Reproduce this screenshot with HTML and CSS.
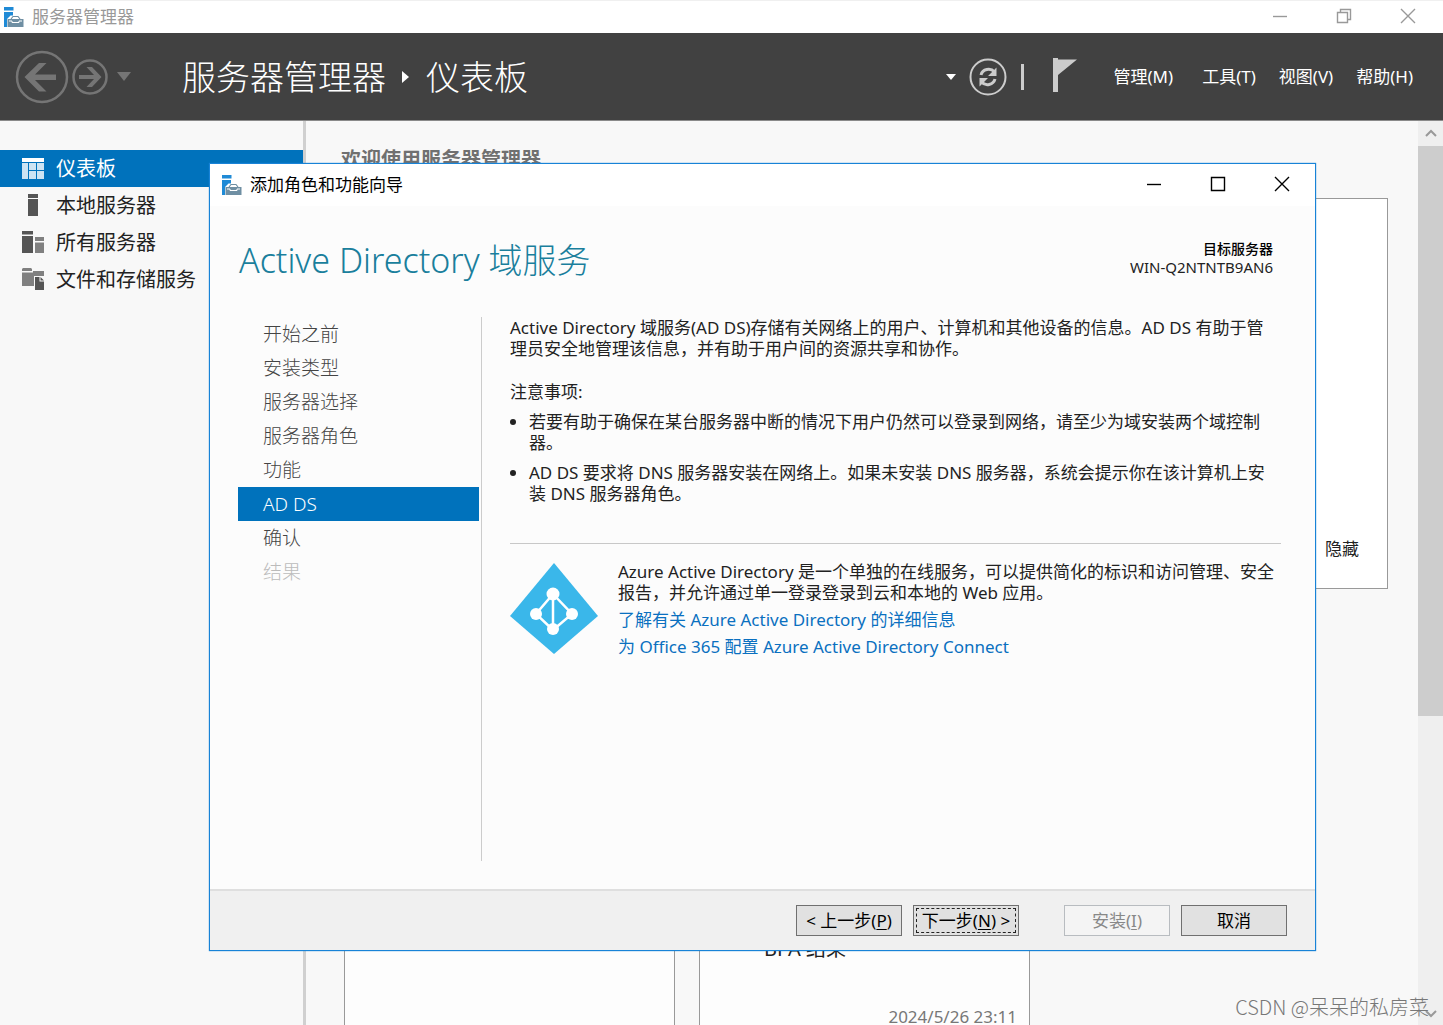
FILE: index.html
```html
<!DOCTYPE html>
<html lang="zh-CN">
<head>
<meta charset="utf-8">
<title>服务器管理器</title>
<link rel="stylesheet" href="styles.css">
</head>
<body>
<svg width="0" height="0" class="defs" aria-hidden="true">
  <symbol id="app-icon" viewBox="0 0 20 20">
    <path fill="#1f8ad6" d="M0 0h9.500v3.500H0zM0 5h9v3.500H6.500L3 12v8H0z"/>
    <path fill="#6f8fa3" d="M3.500 12h16v8h-16z"/>
    <path fill="none" stroke="#6f8fa3" stroke-width="1.200" d="M7 12l2-2.500h5l2 2.500"/>
    <path fill="none" stroke="#fff" stroke-width="1" d="M5 14h3v1.500h7V14h3"/>
  </symbol>
</svg>
<div class="app">
  <header class="titlebar">
    <svg class="app-icon"><use href="#app-icon"/></svg>
    <span class="titlebar-text">服务器管理器</span>
    <div class="window-controls">
      <button type="button" aria-label="最小化"><svg width="16" height="16"><path d="M1 8.500h14"/></svg></button>
      <button type="button" aria-label="还原"><svg width="16" height="16"><path d="M1.500 4.500h10v10h-10zM4.500 4.500v-3h10v10h-3"/></svg></button>
      <button type="button" aria-label="关闭"><svg width="16" height="16"><path d="M1 1l14 14M15 1L1 15"/></svg></button>
    </div>
  </header>

  <nav class="banner">
    <button type="button" class="nav-back" aria-label="后退"><svg width="54" height="54" viewBox="0 0 54 54"><circle cx="27" cy="27" r="25" fill="none" stroke="#757575" stroke-width="2.500"/><path fill="#757575" d="M9.500 27L24 13h7.500L20 24.500h21v5.500H20l11.500 11.500H24z"/></svg></button>
    <button type="button" class="nav-forward" aria-label="前进"><svg width="36" height="38" viewBox="0 0 36 38"><circle cx="18" cy="19" r="16.500" fill="none" stroke="#757575" stroke-width="2.500"/><path fill="#757575" d="M29.500 19L20 29h-5.500l7.500-8H7v-4h15l-7.500-8H20z"/></svg></button>
    <button type="button" class="nav-history" aria-label="历史记录"><svg width="14" height="9"><path fill="#757575" d="M0 0h14L7 9z"/></svg></button>
    <div class="breadcrumb">
      <span>服务器管理器</span>
      <svg width="8" height="12"><path fill="#fff" d="M0 0l7 6-7 6z"/></svg>
      <span>仪表板</span>
    </div>
    <div class="tools">
      <button type="button" aria-label="更多"><svg width="10" height="6"><path fill="#fff" d="M0 0h10L5 6z"/></svg></button>
      <button type="button" class="refresh" aria-label="刷新"><svg width="38" height="38" viewBox="0 0 38 38"><circle cx="19" cy="19" r="17.500" fill="none" stroke="#ccc" stroke-width="2"/><g fill="none" stroke="#ccc" stroke-width="3"><path d="M12 17c1.500-6 9.500-7.500 13.500-3"/><path d="M26 21c-1.500 6-9.500 7.500-13.500 3"/></g><path fill="#ccc" d="M27.500 9.500v8.500H19zM10.500 28.500V20H19z"/></svg></button>
      <span class="separator"></span>
      <button type="button" class="flag" aria-label="通知"><svg width="24" height="34"><path fill="#ccc" d="M0 0h5v34H0zM5 1.500h19L5 17z"/></svg></button>
      <button type="button" class="menu menu-first">管理(M)</button>
      <button type="button" class="menu">工具(T)</button>
      <button type="button" class="menu">视图(V)</button>
      <button type="button" class="menu">帮助(H)</button>
    </div>
  </nav>

  <div class="workspace">
    <aside class="sidebar">
      <a href="#" class="side-item current"><svg width="24" height="24"><path fill="#fff" d="M1 1h22v4H1z"/><path fill="#cde4f3" d="M1 6h6v16H1zM8 6h7v7H8zM16 6h7v7h-7zM8 14h7v8H8zM16 14h7v8h-7z"/></svg>仪表板</a>
      <a href="#" class="side-item"><svg width="24" height="24"><path fill="#555" d="M7 0h10v4H7zM7 5h10v17H7z"/></svg>本地服务器</a>
      <a href="#" class="side-item"><svg width="24" height="24"><path fill="#555" d="M1 0h11v3.500H1zM1 5h11v17H1z"/><path fill="#808080" d="M14 6h9v4h-9zM14 11.500h9V22h-9z"/></svg>所有服务器</a>
      <a href="#" class="side-item"><svg width="24" height="24"><path fill="#808080" d="M2 0h8l1 1v2H1V1zM1 4.500h11V3h11v5h-10v10H1z"/><path fill="#555" d="M14 9h4.500v4.500H23V22h-9zM19.500 9L23 12.500h-3.500z"/></svg>文件和存储服务</a>
    </aside>
    <main class="dashboard">
      <h1>欢迎使用服务器管理器</h1>
      <section class="welcome"><button type="button" class="hide-button">隐藏</button></section>
      <section class="tiles">
        <article class="tile"></article>
        <article class="tile"><p class="tile-row">BPA 结果</p><time>2024/5/26 23:11</time></article>
      </section>
    </main>
    <div class="scrollbar" aria-hidden="true">
      <svg width="14" height="24"><path d="M2 15l5-5 5 5"/></svg>
      <div class="thumb"></div>
      <svg width="14" height="24" class="scroll-down"><path d="M2 10l5 5 5-5"/></svg>
    </div>
  </div>
</div>

<div class="wizard" role="dialog" aria-labelledby="wizard-title">
  <header class="wizard-titlebar">
    <svg class="app-icon"><use href="#app-icon"/></svg>
    <span id="wizard-title">添加角色和功能向导</span>
    <div class="window-controls">
      <button type="button" aria-label="最小化"><svg width="16" height="16"><path d="M1 8.500h14"/></svg></button>
      <button type="button" aria-label="最大化"><svg width="16" height="16"><path d="M1.500 1.500h13v13h-13z"/></svg></button>
      <button type="button" aria-label="关闭"><svg width="16" height="16"><path d="M1 1l14 14M15 1L1 15"/></svg></button>
    </div>
  </header>
  <div class="wizard-head">
    <h2>Active Directory 域服务</h2>
    <p class="target"><strong>目标服务器</strong><span>WIN-Q2NTNTB9AN6</span></p>
  </div>
  <div class="wizard-body">
    <ol class="steps">
      <li>开始之前</li>
      <li>安装类型</li>
      <li>服务器选择</li>
      <li>服务器角色</li>
      <li>功能</li>
      <li class="active">AD DS</li>
      <li>确认</li>
      <li class="disabled">结果</li>
    </ol>
    <div class="content">
      <p>Active Directory 域服务(AD DS)存储有关网络上的用户、计算机和其他设备的信息。AD DS 有助于管<br>理员安全地管理该信息，并有助于用户间的资源共享和协作。</p>
      <p class="notes-label">注意事项:</p>
      <ul class="notes">
        <li>若要有助于确保在某台服务器中断的情况下用户仍然可以登录到网络，请至少为域安装两个域控制<br>器。</li>
        <li>AD DS 要求将 DNS 服务器安装在网络上。如果未安装 DNS 服务器，系统会提示你在该计算机上安<br>装 DNS 服务器角色。</li>
      </ul>
      <div class="azure">
        <svg width="88" height="91" viewBox="0 0 88 91"><path fill="#3ab7ea" d="M44 0l44 53-44 38L0 53z"/><g stroke="#fff" stroke-width="2.500" fill="none"><path d="M43 31v36M43 31L26 51l17 16 19-16z"/></g><g fill="#fff"><circle cx="43" cy="31" r="6.500"/><circle cx="26" cy="51" r="6"/><circle cx="62" cy="51" r="6"/><circle cx="43" cy="66" r="6"/></g></svg>
        <div class="azure-text">
          <p>Azure Active Directory 是一个单独的在线服务，可以提供简化的标识和访问管理、安全<br>报告，并允许通过单一登录登录到云和本地的 Web 应用。</p>
          <a href="#">了解有关 Azure Active Directory 的详细信息</a>
          <a href="#">为 Office 365 配置 Azure Active Directory Connect</a>
        </div>
      </div>
    </div>
  </div>
  <footer class="wizard-footer">
    <button type="button">&lt; 上一步(<u>P</u>)</button>
    <button type="button" class="default">下一步(<u>N</u>) &gt;</button>
    <button type="button" class="install" disabled>安装(<u>I</u>)</button>
    <button type="button">取消</button>
  </footer>
</div>
<div class="watermark">CSDN @呆呆的私房菜</div>
</body>
</html>
```

FILE: styles.css
```css
* { box-sizing: border-box; }

body {
  margin: 0;
  height: 100vh;
  overflow: hidden;
  position: relative;
  font: 17px/22px "Noto Sans", "Noto Sans CJK SC", sans-serif;
  color: #222;
  background: #f8f8f8;
}

h1, h2, p, ul, ol { margin: 0; padding: 0; }
svg { display: block; flex: none; }
a { text-decoration: none; }

button {
  font: inherit;
  color: inherit;
  background: none;
  border: 0;
  padding: 0;
  white-space: nowrap;
}

.defs { position: absolute; }
.app { height: 100%; display: flex; flex-direction: column; }
.app-icon { width: 20px; height: 20px; }

/* Main window title bar */
.titlebar {
  height: 33px;
  flex: none;
  display: flex;
  align-items: center;
  gap: 8px;
  padding: 0 27px 0 4px;
  background: #fff;
  border-top: 1px solid #f0f0f0;
  color: #999;
}

.window-controls { margin-left: auto; padding-bottom: 3px; display: flex; gap: 48px; }
.window-controls path { fill: none; stroke: currentColor; stroke-width: 1.4; }

/* Dark navigation banner */
.banner {
  height: 88px;
  flex: none;
  display: flex;
  align-items: center;
  padding: 0 30px 0 15px;
  background: #414141;
  border-bottom: 1px solid #8a8a8a;
  color: #fff;
}

.nav-forward { margin-left: 3px; }
.nav-history { margin-left: 9px; }

.breadcrumb {
  display: flex;
  align-items: center;
  gap: 16px;
  margin-left: 51px;
  font-size: 34px;
  line-height: 44px;
  font-weight: 300;
}

.tools { margin-left: auto; display: flex; align-items: center; }
.refresh { margin-left: 13px; }
.separator { width: 3px; height: 26px; margin-left: 14px; background: #ccc; }
.flag { margin-left: 29px; align-self: flex-start; }
.menu { margin-left: 23px; }
.menu-first { margin-left: 37px; }
.menu-first + .menu { margin-left: 29px; }

/* Workspace */
.workspace { flex: 1; min-height: 0; display: flex; }

.sidebar {
  width: 306px;
  flex: none;
  padding-top: 29px;
  border-right: 3px solid #d0d0d0;
}

.side-item {
  height: 37px;
  display: flex;
  align-items: center;
  gap: 11px;
  padding-left: 21px;
  font-size: 20px;
  color: #222;
}

.side-item.current { background: #0072bc; color: #fff; }

.dashboard { flex: 1; min-width: 0; padding: 27px 30px 0 35px; }
.dashboard h1 { font-size: 20px; line-height: 24px; color: #707070; }

.welcome {
  height: 391px;
  margin: 26px 0 0 3px;
  padding-right: 28px;
  display: flex;
  justify-content: flex-end;
  align-items: flex-end;
  background: #fff;
  border: 1px solid #999;
}

.hide-button { padding-bottom: 28px; }

.tiles { display: flex; gap: 24px; margin: 48px 0 0 3px; }

.tile {
  width: 331px;
  height: 420px;
  padding: 300px 12px 0 64px;
  display: flex;
  flex-direction: column;
  background: #fdfdfd;
  border: 1px solid #999;
}

.tile-row { font-size: 20px; }
.tile time { margin-top: 49px; align-self: flex-end; line-height: 16px; color: #777; }

.scrollbar {
  width: 25px;
  flex: none;
  display: flex;
  flex-direction: column;
  align-items: center;
  background: #efefef;
}

.scrollbar path { fill: none; stroke: #999; stroke-width: 2; }
.thumb { width: 100%; height: 63%; margin-top: 1px; background: #cdcdcd; }
.scroll-down { margin-top: auto; }

/* Wizard window, floating above the dashboard */
.wizard {
  position: absolute;
  top: 163px;
  right: 127px;
  bottom: 74px;
  left: 209px;
  display: flex;
  flex-direction: column;
  background: #fcfcfc;
  border: 1px solid #1883d7;
  box-shadow: 0 0 1px #1883d7;
}

.wizard-titlebar {
  height: 42px;
  flex: none;
  display: flex;
  align-items: center;
  gap: 8px;
  padding: 0 25px 0 12px;
  background: #fff;
  color: #000;
}

.wizard-head {
  display: flex;
  justify-content: space-between;
  align-items: flex-start;
  padding: 32px 42px 0 29px;
}

.wizard-head h2 { font-size: 34px; line-height: 44px; font-weight: 300; color: #1a7f9c; }

.target {
  display: flex;
  flex-direction: column;
  align-items: flex-end;
  padding-top: 2px;
  font-size: 15px;
  line-height: 18px;
}

.target strong { font-size: 14px; font-weight: 500; color: #000; }

.wizard-body { flex: 1; min-height: 0; display: flex; padding: 35px 34px 28px 28px; }

.steps {
  width: 244px;
  flex: none;
  padding-right: 2px;
  border-right: 1px solid #ccc;
  list-style: none;
  font-size: 19px;
  line-height: 34px;
  font-weight: 300;
  color: #444;
}

.steps li { padding-left: 25px; }
.steps .active { background: #0072bc; color: #fff; }
.steps .disabled { color: #bbb; }

.content {
  flex: 1;
  min-width: 0;
  padding-left: 28px;
  line-height: 21px;
  white-space: nowrap;
}

.notes-label { margin-top: 22px; }
.notes { margin-top: 9px; padding-left: 19px; }
.notes li + li { margin-top: 9px; }

.azure {
  display: flex;
  gap: 20px;
  margin-top: 39px;
  padding-top: 17px;
  border-top: 1px solid #c8c8c8;
}

.azure svg { margin-top: 2px; }
.azure-text { display: flex; flex-direction: column; align-items: flex-start; }
.azure-text a { margin-top: 6px; color: #0a70c0; }

.wizard-footer {
  height: 61px;
  flex: none;
  display: flex;
  justify-content: flex-end;
  padding: 14px 28px 0;
  gap: 11px;
  background: #f0f0f0;
  border-top: 2px solid #dfdfdf;
  color: #000;
}

.wizard-footer button {
  width: 106px;
  height: 31px;
  background: #e1e1e1;
  border: 1px solid #707070;
}

.wizard-footer .default { outline: 1px dashed #222; outline-offset: -4px; }
.wizard-footer .install { margin-left: 34px; background: #f4f4f4; border-color: #b8bcc0; color: #888; }
.wizard-footer u { text-underline-offset: 2px; }

.watermark {
  position: absolute;
  right: 14px;
  bottom: 6px;
  font: 20px/24px "Noto Sans CJK SC", sans-serif;
  font-weight: 300;
  color: #777;
}
```
